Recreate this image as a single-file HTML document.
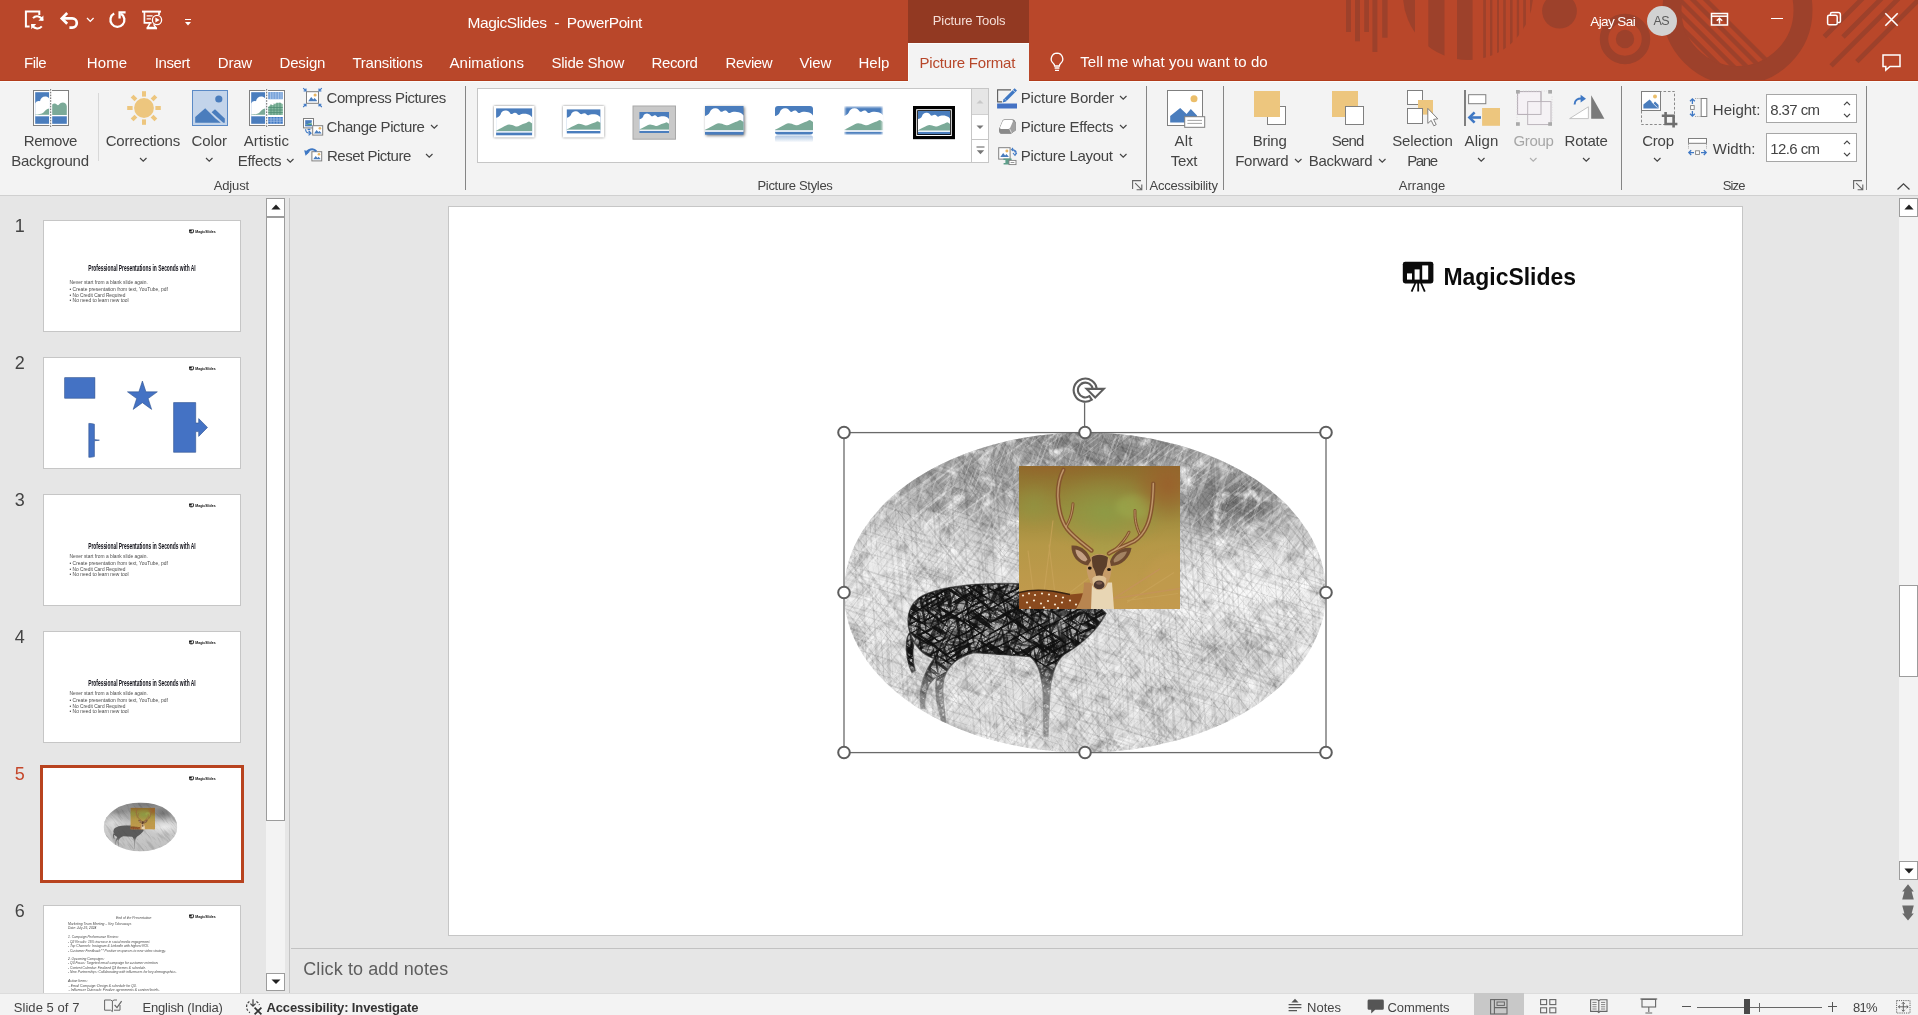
<!DOCTYPE html>
<html lang="en"><head><meta charset="utf-8"><title>MagicSlides - PowerPoint</title>
<style>
html,body{margin:0;padding:0;}
body{width:1918px;height:1015px;overflow:hidden;background:#E6E6E6;font-family:"Liberation Sans",sans-serif;position:relative;}
.t{position:absolute;white-space:pre;line-height:1;margin:0;padding:0;}
.r{position:absolute;box-sizing:border-box;display:block;}
svg{overflow:visible}
</style></head><body><div id="app" style="position:absolute;left:0;top:0;width:1918px;height:1015px;will-change:transform;">
<!-- part_header -->
<div class="r" style="left:0px;top:0px;width:1918px;height:81px;background:#B9472A;"></div>
<svg class="r" style="left:0px;top:0px;overflow:hidden;" width="1918" height="81" viewBox="0 0 1918 81"><rect x="1346" y="0" width="5" height="32" fill="#9D412B"/><rect x="1355" y="0" width="5" height="41.3" fill="#9D412B"/><rect x="1364.2" y="0" width="4.8" height="32" fill="#9D412B"/><rect x="1372.4" y="0" width="5" height="52" fill="#9D412B"/><rect x="1382.2" y="0" width="5.4" height="37.7" fill="#9D412B"/><clipPath id="hd"><circle cx="1468" cy="-5" r="65"/></clipPath><g clip-path="url(#hd)"><rect x="1403" y="0" width="12" height="70" fill="#9D412B"/><rect x="1428.3" y="0" width="16.2" height="70" fill="#9D412B"/><rect x="1457" y="0" width="15.6" height="70" fill="#9D412B"/><rect x="1483.2" y="0" width="2.7" height="70" fill="#9D412B"/><rect x="1490" y="0" width="2.4" height="70" fill="#9D412B"/><rect x="1497" y="0" width="2" height="70" fill="#9D412B"/><rect x="1503.2" y="0" width="2.6" height="70" fill="#9D412B"/><rect x="1510" y="0" width="2.6" height="70" fill="#9D412B"/><rect x="1516.8" y="0" width="2.3" height="70" fill="#9D412B"/><rect x="1523.2" y="0" width="2.7" height="70" fill="#9D412B"/><rect x="1530" y="0" width="3" height="70" fill="#9D412B"/></g><circle cx="1559.5" cy="11.1" r="17.4" fill="#9D412B"/><circle cx="1625" cy="39" r="21" fill="none" stroke="#9D412B" stroke-width="8.5"/><circle cx="1625" cy="39" r="9.2" fill="#9D412B"/><circle cx="1737.5" cy="10" r="65.5" fill="none" stroke="#9D412B" stroke-width="19"/><clipPath id="br"><circle cx="1737.5" cy="10" r="57"/></clipPath><g clip-path="url(#br)"><path d="M1621 -20 L1741 100" stroke="#9D412B" stroke-width="4.4" fill="none"/><path d="M1634 -20 L1754 100" stroke="#9D412B" stroke-width="4.4" fill="none"/><path d="M1647 -20 L1767 100" stroke="#9D412B" stroke-width="4.4" fill="none"/><path d="M1660 -20 L1780 100" stroke="#9D412B" stroke-width="4.4" fill="none"/><path d="M1673 -20 L1793 100" stroke="#9D412B" stroke-width="4.4" fill="none"/><path d="M1686 -20 L1806 100" stroke="#9D412B" stroke-width="4.4" fill="none"/></g><path d="M1824.3 36.7 L1881 -20" stroke="#9D412B" stroke-width="4.8" fill="none"/><path d="M1843 37 L1900 -20" stroke="#9D412B" stroke-width="4.8" fill="none"/><path d="M1831.1 65.9 L1917 -20" stroke="#9D412B" stroke-width="4.8" fill="none"/><path d="M1856.8 61.6 L1938.4 -20" stroke="#9D412B" stroke-width="4.8" fill="none"/></svg>
<div class="r" style="left:0px;top:80px;width:1918px;height:1px;background:#B23C1B;"></div>
<div class="r" style="left:908px;top:0px;width:121px;height:43px;background:#923922;"></div>
<div class="r" style="left:908px;top:43px;width:121px;height:38px;background:#F3F3F3;"></div>
<div class="r" style="left:908px;top:43px;width:121px;height:1px;background:#FAFCFC;"></div>
<div class="r" style="left:908px;top:43px;width:1px;height:38px;background:#FAFCFC;"></div>
<div class="t" style="left:932.80px;top:14.00px;font-size:13px;color:#F4DDD6;letter-spacing:-0.114px;">Picture Tools</div>
<div class="t" style="left:467.50px;top:14.88px;font-size:15.5px;color:#fff;letter-spacing:-0.412px;">MagicSlides  -  PowerPoint</div>
<div class="t" style="left:24.00px;top:55.30px;font-size:15px;color:#fff;letter-spacing:-0.493px;">File</div>
<div class="t" style="left:86.80px;top:55.30px;font-size:15px;color:#fff;letter-spacing:0.097px;">Home</div>
<div class="t" style="left:154.80px;top:55.30px;font-size:15px;color:#fff;letter-spacing:-0.419px;">Insert</div>
<div class="t" style="left:217.80px;top:55.30px;font-size:15px;color:#fff;letter-spacing:-0.201px;">Draw</div>
<div class="t" style="left:279.50px;top:55.30px;font-size:15px;color:#fff;letter-spacing:-0.157px;">Design</div>
<div class="t" style="left:352.50px;top:55.30px;font-size:15px;color:#fff;letter-spacing:-0.255px;">Transitions</div>
<div class="t" style="left:449.50px;top:55.30px;font-size:15px;color:#fff;letter-spacing:0.030px;">Animations</div>
<div class="t" style="left:551.50px;top:55.30px;font-size:15px;color:#fff;letter-spacing:-0.255px;">Slide Show</div>
<div class="t" style="left:651.50px;top:55.30px;font-size:15px;color:#fff;letter-spacing:-0.393px;">Record</div>
<div class="t" style="left:725.50px;top:55.30px;font-size:15px;color:#fff;letter-spacing:-0.414px;">Review</div>
<div class="t" style="left:799.50px;top:55.30px;font-size:15px;color:#fff;letter-spacing:-0.136px;">View</div>
<div class="t" style="left:858.50px;top:55.30px;font-size:15px;color:#fff;letter-spacing:0.037px;">Help</div>
<div class="t" style="left:919.50px;top:55.30px;font-size:15px;color:#B7472A;letter-spacing:-0.190px;">Picture Format</div>
<div class="t" style="left:1080.20px;top:54.30px;font-size:15px;color:#fff;letter-spacing:0.093px;">Tell me what you want to do</div>
<svg class="r" style="left:1048px;top:51px;" width="18" height="22" viewBox="0 0 18 22"><path d="M9 2.2a5.8 5.8 0 0 0-3.6 10.3c.8.7 1.2 1.5 1.2 2.5h4.8c0-1 .4-1.8 1.2-2.5A5.8 5.8 0 0 0 9 2.2z" fill="none" stroke="#fff" stroke-width="1.3"/><path d="M6.6 17h4.8M7 19.3h4" stroke="#fff" stroke-width="1.3"/></svg>
<div class="t" style="left:1590.20px;top:14.57px;font-size:13.5px;color:#fff;letter-spacing:-0.566px;">Ajay Sai</div>
<div class="r" style="left:1646.5px;top:6px;width:30px;height:30px;border-radius:50%;background:#D2D2D2"></div>
<div class="t" style="left:1653.50px;top:14.92px;font-size:12.5px;color:#5a5a5a;letter-spacing:-0.588px;">AS</div>
<svg class="r" style="left:1710px;top:12px;" width="19" height="15" viewBox="0 0 19 15"><rect x="1.5" y="1.5" width="16" height="11.5" fill="none" stroke="#fff" stroke-width="1.5"/><path d="M1.5 4.2h16" stroke="#fff" stroke-width="1.5"/><path d="M9.5 11.8V6.4M6.8 8.8l2.7-2.6L12.2 8.8" fill="none" stroke="#fff" stroke-width="1.5"/></svg>
<div class="r" style="left:1771px;top:17.7px;width:12px;height:1.6px;background:#fff;"></div>
<svg class="r" style="left:1826px;top:11px;" width="16" height="16" viewBox="0 0 16 16"><rect x="1.6" y="4.2" width="9.6" height="9.6" rx="1.6" fill="none" stroke="#fff" stroke-width="1.5"/><path d="M4.4 4V3.2a1.6 1.6 0 0 1 1.6-1.6h6.2a2.2 2.2 0 0 1 2.2 2.2V10a1.6 1.6 0 0 1-1.6 1.6h-1" fill="none" stroke="#fff" stroke-width="1.5"/></svg>
<svg class="r" style="left:1884px;top:12px;" width="15" height="15" viewBox="0 0 15 15"><path d="M1.3 1.3L13.7 13.7M13.7 1.3L1.3 13.7" stroke="#fff" stroke-width="1.6"/></svg>
<svg class="r" style="left:1881px;top:53px;" width="21" height="19" viewBox="0 0 21 19"><path d="M2 2h17v11.5h-10l-4.2 3.6v-3.6H2z" fill="none" stroke="#fff" stroke-width="1.5" stroke-linejoin="miter"/></svg>
<svg class="r" style="left:24px;top:10px;" width="22" height="21" viewBox="0 0 22 21"><path d="M5.6 16.4H1.9V1.4h13.4v3.6" fill="none" stroke="#fff" stroke-width="2"/><path d="M18.6 10.6a5.6 5.6 0 0 0-9.6-2.4M8 14.2a5.6 5.6 0 0 0 9.8 2.2" fill="none" stroke="#fff" stroke-width="2"/><path d="M19.4 5.6v5.2h-5zM7.2 19.2v-5.2h5z" fill="#fff"/></svg>
<svg class="r" style="left:59px;top:11px;" width="22" height="19" viewBox="0 0 22 19"><path d="M4 7.4h9.2a4.6 4.6 0 0 1 0 9.2H10.4" fill="none" stroke="#fff" stroke-width="2.7"/><path d="M8.2 2L2.8 7.4l5.4 5.4" fill="none" stroke="#fff" stroke-width="2.7"/></svg>
<svg class="r" style="left:86.1px;top:17px;" width="8.6" height="5.4" viewBox="0 0 8.6 5.4"><path d="M1 1 L4.3 4.4 L7.6 1" fill="none" stroke="#fff" stroke-width="1.3"/></svg>
<svg class="r" style="left:107px;top:10px;" width="21" height="20" viewBox="0 0 21 20"><path d="M7.2 3.6A7 7 0 1 0 14 3.8" fill="none" stroke="#fff" stroke-width="2.3"/><path d="M12.6 8.4V2.4H18.6" fill="none" stroke="#fff" stroke-width="2.3"/></svg>
<svg class="r" style="left:141px;top:10px;" width="23" height="20" viewBox="0 0 23 20"><path d="M1 1.6h19" stroke="#fff" stroke-width="2"/><path d="M3.4 2v10.8h7.2M18 2v3" fill="none" stroke="#fff" stroke-width="1.7"/><path d="M5.6 5.8h6M5.6 8.8h4.4" stroke="#fff" stroke-width="1.2"/><circle cx="16" cy="10" r="4.6" fill="none" stroke="#fff" stroke-width="1.3"/><path d="M14.4 7.4v5.2l4.2-2.6z" fill="#fff"/><path d="M9 13.4l-2.4 4h8.2l-2.2-3" fill="none" stroke="#fff" stroke-width="1.5"/><path d="M5.6 18.4h10.4" stroke="#fff" stroke-width="1.8"/></svg>
<div class="r" style="left:184.5px;top:19px;width:6px;height:1.2px;background:#fff;"></div>
<svg class="r" style="left:183.5px;top:21.5px;" width="8" height="4" viewBox="0 0 8 4"><path d="M1 0h6L4 3.4z" fill="#fff"/></svg>
<!-- part_ribbon -->
<div class="r" style="left:0px;top:81px;width:1918px;height:114px;background:#F3F3F3;"></div>
<div class="r" style="left:0px;top:81px;width:908px;height:1px;background:#FAFCFC;"></div>
<div class="r" style="left:1029px;top:81px;width:889px;height:1px;background:#FAFCFC;"></div>
<div class="r" style="left:0px;top:195px;width:1918px;height:1px;background:#D0D0D0;"></div>
<div class="r" style="left:465px;top:86px;width:1px;height:104px;background:#858585;"></div>
<div class="r" style="left:1146px;top:86px;width:1px;height:104px;background:#858585;"></div>
<div class="r" style="left:1223px;top:86px;width:1px;height:104px;background:#858585;"></div>
<div class="r" style="left:1621px;top:86px;width:1px;height:104px;background:#858585;"></div>
<div class="r" style="left:1866px;top:86px;width:1px;height:104px;background:#858585;"></div>
<div class="r" style="left:98px;top:93px;width:1px;height:68px;background:#D8D8D8;"></div>
<div class="t" style="left:213.75px;top:178.50px;font-size:13px;color:#444444;letter-spacing:-0.147px;">Adjust</div>
<div class="t" style="left:757.50px;top:178.50px;font-size:13px;color:#444444;letter-spacing:-0.320px;">Picture Styles</div>
<div class="t" style="left:1149.50px;top:178.50px;font-size:13px;color:#444444;letter-spacing:-0.196px;">Accessibility</div>
<div class="t" style="left:1398.80px;top:178.50px;font-size:13px;color:#444444;letter-spacing:0.021px;">Arrange</div>
<div class="t" style="left:1722.80px;top:178.50px;font-size:13px;color:#444444;letter-spacing:-0.898px;">Size</div>
<div class="t" style="left:23.75px;top:132.90px;font-size:15px;color:#444444;letter-spacing:-0.434px;">Remove</div>
<div class="t" style="left:11.25px;top:152.65px;font-size:15px;color:#444444;letter-spacing:-0.256px;">Background</div>
<div class="t" style="left:105.75px;top:132.90px;font-size:15px;color:#444444;letter-spacing:-0.222px;">Corrections</div>
<div class="t" style="left:191.50px;top:132.90px;font-size:15px;color:#444444;letter-spacing:-0.069px;">Color</div>
<div class="t" style="left:243.75px;top:132.90px;font-size:15px;color:#444444;letter-spacing:0.031px;">Artistic</div>
<div class="t" style="left:237.75px;top:152.65px;font-size:15px;color:#444444;letter-spacing:-0.297px;">Effects</div>
<div class="t" style="left:1174.50px;top:132.90px;font-size:15px;color:#444444;letter-spacing:0.248px;">Alt</div>
<div class="t" style="left:1170.75px;top:152.65px;font-size:15px;color:#444444;letter-spacing:-0.315px;">Text</div>
<div class="t" style="left:1252.75px;top:132.90px;font-size:15px;color:#444444;letter-spacing:-0.254px;">Bring</div>
<div class="t" style="left:1235.25px;top:152.65px;font-size:15px;color:#444444;letter-spacing:-0.288px;">Forward</div>
<div class="t" style="left:1331.80px;top:132.90px;font-size:15px;color:#444444;letter-spacing:-0.833px;">Send</div>
<div class="t" style="left:1308.80px;top:152.65px;font-size:15px;color:#444444;letter-spacing:-0.308px;">Backward</div>
<div class="t" style="left:1392.20px;top:132.90px;font-size:15px;color:#444444;letter-spacing:-0.123px;">Selection</div>
<div class="t" style="left:1407.20px;top:152.65px;font-size:15px;color:#444444;letter-spacing:-1.358px;">Pane</div>
<div class="t" style="left:1464.50px;top:132.90px;font-size:15px;color:#444444;letter-spacing:0.129px;">Align</div>
<div class="t" style="left:1564.50px;top:132.90px;font-size:15px;color:#444444;letter-spacing:-0.149px;">Rotate</div>
<div class="t" style="left:1642.20px;top:132.90px;font-size:15px;color:#444444;letter-spacing:-0.228px;">Crop</div>
<div class="t" style="left:1513.50px;top:132.90px;font-size:15px;color:#A6A6A6;letter-spacing:-0.338px;">Group</div>
<svg class="r" style="left:139.15px;top:157.4px;" width="8.5" height="5.2" viewBox="0 0 8.5 5.2"><path d="M1 1 L4.25 4.2 L7.5 1" fill="none" stroke="#444444" stroke-width="1.2"/></svg>
<svg class="r" style="left:204.95px;top:157.4px;" width="8.5" height="5.2" viewBox="0 0 8.5 5.2"><path d="M1 1 L4.25 4.2 L7.5 1" fill="none" stroke="#444444" stroke-width="1.2"/></svg>
<svg class="r" style="left:286.15px;top:158.4px;" width="8.5" height="5.2" viewBox="0 0 8.5 5.2"><path d="M1 1 L4.25 4.2 L7.5 1" fill="none" stroke="#444444" stroke-width="1.2"/></svg>
<svg class="r" style="left:1293.65px;top:158.4px;" width="8.5" height="5.2" viewBox="0 0 8.5 5.2"><path d="M1 1 L4.25 4.2 L7.5 1" fill="none" stroke="#444444" stroke-width="1.2"/></svg>
<svg class="r" style="left:1377.95px;top:158.4px;" width="8.5" height="5.2" viewBox="0 0 8.5 5.2"><path d="M1 1 L4.25 4.2 L7.5 1" fill="none" stroke="#444444" stroke-width="1.2"/></svg>
<svg class="r" style="left:1477.45px;top:157.4px;" width="8.5" height="5.2" viewBox="0 0 8.5 5.2"><path d="M1 1 L4.25 4.2 L7.5 1" fill="none" stroke="#444444" stroke-width="1.2"/></svg>
<svg class="r" style="left:1529.25px;top:157.4px;" width="8.5" height="5.2" viewBox="0 0 8.5 5.2"><path d="M1 1 L4.25 4.2 L7.5 1" fill="none" stroke="#B0B0B0" stroke-width="1.2"/></svg>
<svg class="r" style="left:1581.75px;top:157.4px;" width="8.5" height="5.2" viewBox="0 0 8.5 5.2"><path d="M1 1 L4.25 4.2 L7.5 1" fill="none" stroke="#444444" stroke-width="1.2"/></svg>
<svg class="r" style="left:1653.25px;top:157.4px;" width="8.5" height="5.2" viewBox="0 0 8.5 5.2"><path d="M1 1 L4.25 4.2 L7.5 1" fill="none" stroke="#444444" stroke-width="1.2"/></svg>
<div class="t" style="left:326.50px;top:90.40px;font-size:15px;color:#444444;letter-spacing:-0.439px;">Compress Pictures</div>
<div class="t" style="left:326.50px;top:119.20px;font-size:15px;color:#444444;letter-spacing:-0.386px;">Change Picture</div>
<div class="t" style="left:327.00px;top:148.20px;font-size:15px;color:#444444;letter-spacing:-0.484px;">Reset Picture</div>
<div class="t" style="left:1020.75px;top:90.40px;font-size:15px;color:#444444;letter-spacing:-0.188px;">Picture Border</div>
<div class="t" style="left:1020.75px;top:119.20px;font-size:15px;color:#444444;letter-spacing:-0.262px;">Picture Effects</div>
<div class="t" style="left:1020.75px;top:148.20px;font-size:15px;color:#444444;letter-spacing:-0.278px;">Picture Layout</div>
<svg class="r" style="left:429.75px;top:124.4px;" width="8.5" height="5.2" viewBox="0 0 8.5 5.2"><path d="M1 1 L4.25 4.2 L7.5 1" fill="none" stroke="#444444" stroke-width="1.2"/></svg>
<svg class="r" style="left:424.75px;top:153.4px;" width="8.5" height="5.2" viewBox="0 0 8.5 5.2"><path d="M1 1 L4.25 4.2 L7.5 1" fill="none" stroke="#444444" stroke-width="1.2"/></svg>
<svg class="r" style="left:1119.25px;top:95.4px;" width="8.5" height="5.2" viewBox="0 0 8.5 5.2"><path d="M1 1 L4.25 4.2 L7.5 1" fill="none" stroke="#444444" stroke-width="1.2"/></svg>
<svg class="r" style="left:1119.25px;top:124.4px;" width="8.5" height="5.2" viewBox="0 0 8.5 5.2"><path d="M1 1 L4.25 4.2 L7.5 1" fill="none" stroke="#444444" stroke-width="1.2"/></svg>
<svg class="r" style="left:1119.25px;top:152.9px;" width="8.5" height="5.2" viewBox="0 0 8.5 5.2"><path d="M1 1 L4.25 4.2 L7.5 1" fill="none" stroke="#444444" stroke-width="1.2"/></svg>
<div class="t" style="left:1712.80px;top:102.30px;font-size:15px;color:#444444;letter-spacing:0.025px;">Height:</div>
<div class="t" style="left:1712.80px;top:141.30px;font-size:15px;color:#444444;letter-spacing:0.032px;">Width:</div>
<div class="r" style="left:1766.3px;top:94.3px;width:91px;height:28.8px;background:#fff;border:1px solid #A6A6A6;"></div>
<div class="r" style="left:1766.3px;top:133.3px;width:91px;height:28.8px;background:#fff;border:1px solid #A6A6A6;"></div>
<div class="t" style="left:1770.20px;top:101.80px;font-size:15px;color:#444444;letter-spacing:-0.580px;">8.37 cm</div>
<div class="t" style="left:1770.20px;top:140.80px;font-size:15px;color:#444444;letter-spacing:-0.580px;">12.6 cm</div>
<svg class="r" style="left:1842px;top:98.5px;" width="10" height="21" viewBox="0 0 10 21"><path d="M2 6.2L5 3.2L8 6.2M2 14.8L5 17.8L8 14.8" fill="none" stroke="#444" stroke-width="1.2"/></svg>
<svg class="r" style="left:1842px;top:137.5px;" width="10" height="21" viewBox="0 0 10 21"><path d="M2 6.2L5 3.2L8 6.2M2 14.8L5 17.8L8 14.8" fill="none" stroke="#444" stroke-width="1.2"/></svg>
<svg class="r" style="left:1131.5px;top:180px;" width="11" height="11" viewBox="0 0 11 11"><path d="M0.6 9V0.6H9" fill="none" stroke="#666" stroke-width="1.1"/><path d="M3.2 3.2L9.6 9.6M9.8 4.6V9.8H4.6" fill="none" stroke="#666" stroke-width="1.1"/></svg>
<svg class="r" style="left:1852.5px;top:180px;" width="11" height="11" viewBox="0 0 11 11"><path d="M0.6 9V0.6H9" fill="none" stroke="#666" stroke-width="1.1"/><path d="M3.2 3.2L9.6 9.6M9.8 4.6V9.8H4.6" fill="none" stroke="#666" stroke-width="1.1"/></svg>
<svg class="r" style="left:1896px;top:182px;" width="15" height="9" viewBox="0 0 15 9"><path d="M1.5 7.5L7.5 1.8L13.5 7.5" fill="none" stroke="#444" stroke-width="1.3"/></svg>
<div class="r" style="left:477px;top:88px;width:512px;height:74.5px;background:#fff;border:1px solid #C6C6C6;"></div>
<div class="r" style="left:970.5px;top:88px;width:18.5px;height:74.5px;background:#fff;border:1px solid #C6C6C6;"></div>
<div class="r" style="left:971.5px;top:89px;width:16.5px;height:25px;background:#E6E6E6;"></div>
<div class="r" style="left:971.5px;top:114px;width:16.5px;height:1px;background:#D0D0D0;"></div>
<div class="r" style="left:971.5px;top:138.5px;width:16.5px;height:1px;background:#C6C6C6;"></div>
<svg class="r" style="left:976px;top:99px;" width="8" height="5" viewBox="0 0 8 5"><path d="M0.5 4.5L4 1L7.5 4.5z" fill="#C8C8C8"/></svg>
<svg class="r" style="left:976px;top:125px;" width="8" height="5" viewBox="0 0 8 5"><path d="M0.5 0.5L4 4L7.5 0.5z" fill="#777"/></svg>
<svg class="r" style="left:975.5px;top:146px;" width="9" height="10" viewBox="0 0 9 10"><path d="M0.5 1h8" stroke="#777" stroke-width="1.2"/><path d="M0.8 4.2L4.5 8.2L8.2 4.2z" fill="#777"/></svg>
<svg class="r" style="left:493.8px;top:105.5px;" width="40.5" height="31.5" viewBox="0 0 40.5 31.5"><rect x="0" y="0" width="40.5" height="31.5" fill="#fff" style="filter:drop-shadow(0 0.5px 1.2px rgba(0,0,0,.55))"/><g transform="translate(2.1 2.4)"><rect x="0" y="0" width="36" height="26.9" fill="#4A7DBD"/><g transform="scale(1 0.996296)"><path d="M0 9.4 C1.5 9 3.6 8 4.5 6 C5 3.4 7.5 1.8 10 2.1 C12 2.3 13.4 3.6 14.2 5 C15 5.8 16 5.6 16.8 5 C18 4 20 4 21 5.4 C21.6 6.4 22.6 6.9 23.4 6.5 C25 5.2 29 5 31.5 5.8 C33.6 6.4 35.2 7.6 36 8.9 V23 H0z" fill="#fff"/><path d="M0 22.4 C2 21.6 4 20.2 6.5 19 C9 17.8 11 16.3 13 16.2 C15 16.2 17 17.2 19 17.8 C20.6 18.4 22 18.2 23.6 17.2 C25.6 16 28 15.2 30 14.6 C31.4 14.2 32 13.2 32.9 13.2 C33.8 13.3 34.6 14.2 36 15.1 V22.9 H0z" fill="#7BAA98"/><rect x="0" y="22.9" width="36" height="1.4" fill="#fff"/></g></g></svg>
<svg class="r" style="left:563.3px;top:105.5px;" width="41.2" height="31.5" viewBox="0 0 41.2 31.5"><rect x="0" y="0" width="41.2" height="31.5" fill="#fff" style="filter:drop-shadow(0 0.5px 1.2px rgba(0,0,0,.5))"/><g transform="translate(3.8 3.4)"><rect x="0" y="0" width="33.6" height="24" fill="#4A7DBD"/><g transform="scale(0.933333 0.888889)"><path d="M0 9.4 C1.5 9 3.6 8 4.5 6 C5 3.4 7.5 1.8 10 2.1 C12 2.3 13.4 3.6 14.2 5 C15 5.8 16 5.6 16.8 5 C18 4 20 4 21 5.4 C21.6 6.4 22.6 6.9 23.4 6.5 C25 5.2 29 5 31.5 5.8 C33.6 6.4 35.2 7.6 36 8.9 V23 H0z" fill="#fff"/><path d="M0 22.4 C2 21.6 4 20.2 6.5 19 C9 17.8 11 16.3 13 16.2 C15 16.2 17 17.2 19 17.8 C20.6 18.4 22 18.2 23.6 17.2 C25.6 16 28 15.2 30 14.6 C31.4 14.2 32 13.2 32.9 13.2 C33.8 13.3 34.6 14.2 36 15.1 V22.9 H0z" fill="#7BAA98"/><rect x="0" y="22.9" width="36" height="1.4" fill="#fff"/></g></g></svg>
<svg class="r" style="left:632.5px;top:105.5px;" width="42.5" height="33.2" viewBox="0 0 42.5 33.2"><rect x="0" y="0" width="42.5" height="33.2" fill="#C9C9C9" stroke="#A8A8A8" stroke-width="1"/><g transform="translate(6.4 6)"><rect x="0" y="0" width="29.6" height="21" fill="#4A7DBD"/><g transform="scale(0.822222 0.777778)"><path d="M0 9.4 C1.5 9 3.6 8 4.5 6 C5 3.4 7.5 1.8 10 2.1 C12 2.3 13.4 3.6 14.2 5 C15 5.8 16 5.6 16.8 5 C18 4 20 4 21 5.4 C21.6 6.4 22.6 6.9 23.4 6.5 C25 5.2 29 5 31.5 5.8 C33.6 6.4 35.2 7.6 36 8.9 V23 H0z" fill="#fff"/><path d="M0 22.4 C2 21.6 4 20.2 6.5 19 C9 17.8 11 16.3 13 16.2 C15 16.2 17 17.2 19 17.8 C20.6 18.4 22 18.2 23.6 17.2 C25.6 16 28 15.2 30 14.6 C31.4 14.2 32 13.2 32.9 13.2 C33.8 13.3 34.6 14.2 36 15.1 V22.9 H0z" fill="#7BAA98"/><rect x="0" y="22.9" width="36" height="1.4" fill="#fff"/></g></g></svg>
<svg class="r" style="left:704.5px;top:105.8px;" width="38.5" height="28.7" viewBox="0 0 38.5 28.7"><g style="filter:drop-shadow(1px 1.5px 1.5px rgba(0,0,0,.55))"><rect x="0" y="0" width="38.5" height="28.7" fill="#4A7DBD"/><g transform="scale(1.06944 1.06296)"><path d="M0 9.4 C1.5 9 3.6 8 4.5 6 C5 3.4 7.5 1.8 10 2.1 C12 2.3 13.4 3.6 14.2 5 C15 5.8 16 5.6 16.8 5 C18 4 20 4 21 5.4 C21.6 6.4 22.6 6.9 23.4 6.5 C25 5.2 29 5 31.5 5.8 C33.6 6.4 35.2 7.6 36 8.9 V23 H0z" fill="#fff"/><path d="M0 22.4 C2 21.6 4 20.2 6.5 19 C9 17.8 11 16.3 13 16.2 C15 16.2 17 17.2 19 17.8 C20.6 18.4 22 18.2 23.6 17.2 C25.6 16 28 15.2 30 14.6 C31.4 14.2 32 13.2 32.9 13.2 C33.8 13.3 34.6 14.2 36 15.1 V22.9 H0z" fill="#7BAA98"/><rect x="0" y="22.9" width="36" height="1.4" fill="#fff"/></g></g></svg>
<svg class="r" style="left:774.5px;top:105.8px;" width="38" height="37" viewBox="0 0 38 37"><defs><clipPath id="rr5"><rect x="0" y="0" width="38" height="28.7" rx="3"/></clipPath><linearGradient id="rf5" x1="0" y1="0" x2="0" y2="1"><stop offset="0" stop-color="#4A7DBD" stop-opacity=".45"/><stop offset="1" stop-color="#4A7DBD" stop-opacity="0"/></linearGradient></defs><g clip-path="url(#rr5)"><rect x="0" y="0" width="38" height="28.7" fill="#4A7DBD"/><g transform="scale(1.05556 1.06296)"><path d="M0 9.4 C1.5 9 3.6 8 4.5 6 C5 3.4 7.5 1.8 10 2.1 C12 2.3 13.4 3.6 14.2 5 C15 5.8 16 5.6 16.8 5 C18 4 20 4 21 5.4 C21.6 6.4 22.6 6.9 23.4 6.5 C25 5.2 29 5 31.5 5.8 C33.6 6.4 35.2 7.6 36 8.9 V23 H0z" fill="#fff"/><path d="M0 22.4 C2 21.6 4 20.2 6.5 19 C9 17.8 11 16.3 13 16.2 C15 16.2 17 17.2 19 17.8 C20.6 18.4 22 18.2 23.6 17.2 C25.6 16 28 15.2 30 14.6 C31.4 14.2 32 13.2 32.9 13.2 C33.8 13.3 34.6 14.2 36 15.1 V22.9 H0z" fill="#7BAA98"/><rect x="0" y="22.9" width="36" height="1.4" fill="#fff"/></g></g><rect x="0" y="29.5" width="38" height="7" rx="2" fill="url(#rf5)"/></svg>
<svg class="r" style="left:843.8px;top:105.8px;" width="39.2" height="28.7" viewBox="0 0 39.2 28.7"><defs><filter id="sef" x="-20%" y="-20%" width="140%" height="140%"><feGaussianBlur stdDeviation="0.9"/></filter><mask id="sem" maskUnits="userSpaceOnUse" x="-3" y="-3" width="46" height="36"><rect x="1" y="1" width="37.2" height="27.6" fill="#fff" filter="url(#sef)"/></mask></defs><g mask="url(#sem)"><rect x="0" y="0" width="39.2" height="28.7" fill="#4A7DBD"/><g transform="scale(1.08889 1.06296)"><path d="M0 9.4 C1.5 9 3.6 8 4.5 6 C5 3.4 7.5 1.8 10 2.1 C12 2.3 13.4 3.6 14.2 5 C15 5.8 16 5.6 16.8 5 C18 4 20 4 21 5.4 C21.6 6.4 22.6 6.9 23.4 6.5 C25 5.2 29 5 31.5 5.8 C33.6 6.4 35.2 7.6 36 8.9 V23 H0z" fill="#fff"/><path d="M0 22.4 C2 21.6 4 20.2 6.5 19 C9 17.8 11 16.3 13 16.2 C15 16.2 17 17.2 19 17.8 C20.6 18.4 22 18.2 23.6 17.2 C25.6 16 28 15.2 30 14.6 C31.4 14.2 32 13.2 32.9 13.2 C33.8 13.3 34.6 14.2 36 15.1 V22.9 H0z" fill="#7BAA98"/><rect x="0" y="22.9" width="36" height="1.4" fill="#fff"/></g></g></svg>
<svg class="r" style="left:913px;top:105.8px;" width="42" height="33.2" viewBox="0 0 42 33.2"><rect x="0" y="0" width="42" height="33.2" fill="#000"/><rect x="3.2" y="3.2" width="35.6" height="26.8" fill="#fff"/><rect x="4.2" y="4.2" width="33.6" height="24.8" fill="#000"/><g transform="translate(5 5)"><rect x="0" y="0" width="32" height="23.2" fill="#4A7DBD"/><g transform="scale(0.888889 0.859259)"><path d="M0 9.4 C1.5 9 3.6 8 4.5 6 C5 3.4 7.5 1.8 10 2.1 C12 2.3 13.4 3.6 14.2 5 C15 5.8 16 5.6 16.8 5 C18 4 20 4 21 5.4 C21.6 6.4 22.6 6.9 23.4 6.5 C25 5.2 29 5 31.5 5.8 C33.6 6.4 35.2 7.6 36 8.9 V23 H0z" fill="#fff"/><path d="M0 22.4 C2 21.6 4 20.2 6.5 19 C9 17.8 11 16.3 13 16.2 C15 16.2 17 17.2 19 17.8 C20.6 18.4 22 18.2 23.6 17.2 C25.6 16 28 15.2 30 14.6 C31.4 14.2 32 13.2 32.9 13.2 C33.8 13.3 34.6 14.2 36 15.1 V22.9 H0z" fill="#7BAA98"/><rect x="0" y="22.9" width="36" height="1.4" fill="#fff"/></g></g></svg>
<svg class="r" style="left:33px;top:90px;" width="36" height="36" viewBox="0 0 36 36"><rect x="0.5" y="0.5" width="35" height="35" fill="#fff" stroke="#7F7F7F" stroke-width="1"/><rect x="2.2" y="2.2" width="14" height="31.6" fill="#4A7DBD"/><path d="M2.2 13.5 C3 11 5.5 10.5 7 11.2 C7.5 7.5 11 5.6 14 6.8 C15 7.2 15.8 7.8 16.2 8.6 V25 H2.2z" fill="#fff"/><path d="M2.2 24.6 C5 24.4 9 24.2 10.5 22.5 C12 20.8 13.5 18.6 16.2 18.4 V25 H2.2z" fill="#7BAA98"/><rect x="2.2" y="24.8" width="14" height="1.5" fill="#fff"/><path d="M19.2 25 V14.5 C20.5 13.2 22.5 13 23.8 14.6 C24.6 15.4 25.2 15.6 26 14.6 C27.5 12.4 30.5 11.6 32.5 13.6 C33.3 14.4 33.7 15.4 33.8 16.5 V25z" fill="#7BAA98"/><rect x="19.2" y="26.3" width="14.6" height="7.5" fill="#4A7DBD"/><rect x="16.4" y="-1" width="2.6" height="38" fill="#fff"/><path d="M17.7 -1 V37" stroke="#555" stroke-width="0.9" stroke-dasharray="1.6 1.2"/></svg>
<svg class="r" style="left:125.8px;top:89.8px;" width="36" height="36" viewBox="0 0 36 36"><circle cx="18" cy="18" r="9.9" fill="#EDC67E"/><rect x="16" y="1.2" width="4" height="5.4" fill="#EDC67E" transform="rotate(0 18 18)"/><rect x="16" y="1.2" width="4" height="5.4" fill="#EDC67E" transform="rotate(45 18 18)"/><rect x="16" y="1.2" width="4" height="5.4" fill="#EDC67E" transform="rotate(90 18 18)"/><rect x="16" y="1.2" width="4" height="5.4" fill="#EDC67E" transform="rotate(135 18 18)"/><rect x="16" y="1.2" width="4" height="5.4" fill="#EDC67E" transform="rotate(180 18 18)"/><rect x="16" y="1.2" width="4" height="5.4" fill="#EDC67E" transform="rotate(225 18 18)"/><rect x="16" y="1.2" width="4" height="5.4" fill="#EDC67E" transform="rotate(270 18 18)"/><rect x="16" y="1.2" width="4" height="5.4" fill="#EDC67E" transform="rotate(315 18 18)"/></svg>
<svg class="r" style="left:192px;top:90px;" width="36" height="36" viewBox="0 0 36 36"><rect x="0.5" y="0.5" width="35" height="35" fill="#C3D4EA" stroke="#5B8AC6" stroke-width="1"/><circle cx="26.8" cy="9" r="3.6" fill="#4A7DBD"/><path d="M3.2 27 L13.2 18.2 L23.5 28.5 L28.8 32.8 H3.2z" fill="#4A7DBD"/><path d="M19.6 22.2 L23 19.2 L32.8 28.6 V32.8 H31.2z" fill="#4A7DBD"/></svg>
<svg class="r" style="left:249px;top:90px;" width="36" height="36" viewBox="0 0 36 36"><rect x="0.5" y="0.5" width="35" height="35" fill="#fff" stroke="#7F7F7F" stroke-width="1"/><rect x="2.2" y="2.2" width="14" height="31.6" fill="#4A7DBD"/><path d="M2.2 13.5 C3 11 5.5 10.5 7 11.2 C7.5 7.5 11 5.6 14 6.8 C15 7.2 15.8 7.8 16.2 8.6 V25 H2.2z" fill="#fff"/><path d="M2.2 24.6 C5 24.4 9 24.2 10.5 22.5 C12 20.8 13.5 18.6 16.2 18.4 V25 H2.2z" fill="#7BAA98"/><rect x="2.2" y="24.8" width="14" height="1.5" fill="#fff"/><rect x="19.2" y="2.2" width="14.6" height="7" fill="#5B8FD0"/><path d="M19.2 25 V17 C21 14.5 23 14.8 24.5 15.2 C26 13 30 11.5 33.8 14 V25z" fill="#86B9A0"/><rect x="19.2" y="27" width="14.6" height="6.8" fill="#3F78C4"/><path d="M19.2 4h14.6M19.2 6h14.6M19.2 8h14.6M19.2 29h14.6M19.2 31.2h14.6M21.5 2.2v7M24 2.2v7M26.8 2.2v7M29.5 2.2v7M32 2.2v7M22 27v6.8M25 27v6.8M28 27v6.8M31 27v6.8" stroke="#CFE0F5" stroke-width="0.7" opacity=".8"/><path d="M19.2 17.5h14.6M19.2 20h14.6M19.2 22.5h14.6M22 14v11M25 13.5v11.5M28 12.5v12.5M31 12.5v12.5" stroke="#3E7E66" stroke-width="0.8" opacity=".75"/><rect x="16.4" y="-1" width="2.6" height="38" fill="#fff"/><path d="M17.7 -1 V37" stroke="#555" stroke-width="0.9" stroke-dasharray="1.6 1.2"/></svg>
<svg class="r" style="left:303px;top:88px;" width="19" height="19.2" viewBox="0 0 19 19.2"><rect x="3.5" y="3.7" width="12" height="11.6" fill="#fff" stroke="#7F7F7F" stroke-width="1"/><circle cx="12.1" cy="6.98" r="1.56" fill="#E9B562"/><path d="M5.21 13.28 L8.2 9.122 L10.28 11.516 L11.58 10.13 L13.92 12.524 L13.92 13.28z" fill="#4A7DBD"/><path d="M0.2 0.2 L3 3 M0.6 3 H3 V0.6" fill="none" stroke="#3F78C4" stroke-width="1.1"/><path d="M18.8 0.2 L16 3 M18.4 3 H16 V0.6" fill="none" stroke="#3F78C4" stroke-width="1.1"/><path d="M0.2 19 L3 16.2 M0.6 16.2 H3 V18.6" fill="none" stroke="#3F78C4" stroke-width="1.1"/><path d="M18.8 19 L16 16.2 M18.4 16.2 H16 V18.6" fill="none" stroke="#3F78C4" stroke-width="1.1"/></svg>
<svg class="r" style="left:303px;top:118.3px;" width="20.2" height="17.6" viewBox="0 0 20.2 17.6"><rect x="0.5" y="0.5" width="10" height="9.4" fill="#fff" stroke="#7F7F7F" stroke-width="1"/><rect x="2.2" y="2.2" width="6.6" height="6" fill="#4A7DBD"/><path d="M2.2 7 L8.8 4.4 V6.8 H2.2z" fill="#fff"/><path d="M2.2 7.6 L5.5 5.6 L8.8 5.2 V7 H2.2z" fill="#4F9B7F"/><rect x="2.2" y="7" width="6.6" height="1.2" fill="#4A7DBD"/><rect x="9.7" y="7.7" width="10" height="9.4" fill="#fff" stroke="#7F7F7F" stroke-width="1"/><circle cx="16.9" cy="10.32" r="1.32" fill="#E9B562"/><path d="M11.07 15.52 L13.6 12.088 L15.36 14.064 L16.46 12.92 L18.44 14.896 L18.44 15.52z" fill="#4A7DBD"/><path d="M2.6 11.2 C2.6 14.4 4.4 15.2 7.6 15.2 M5.6 12.8 L8 15.2 L5.6 17.4 M4.6 11.4 H7.4" fill="none" stroke="#3F78C4" stroke-width="1.2"/></svg>
<svg class="r" style="left:303.7px;top:147.2px;" width="18.4" height="14.6" viewBox="0 0 18.4 14.6"><rect x="7.9" y="4.7" width="9.8" height="9.2" fill="#fff" stroke="#7F7F7F" stroke-width="1"/><circle cx="14.96" cy="7.26" r="1.3" fill="#E9B562"/><path d="M9.236 12.36 L11.72 8.994 L13.448 10.932 L14.528 9.81 L16.472 11.748 L16.472 12.36z" fill="#4A7DBD"/><path d="M2.6 6.6 C3 2.2 9.5 0.6 12.4 4.4" fill="none" stroke="#3F78C4" stroke-width="2"/><path d="M0.2 3.2 L6 4.6 L1.6 8.8z" fill="#3F78C4"/></svg>
<svg class="r" style="left:997px;top:87.5px;" width="20" height="20.5" viewBox="0 0 20 20.5"><path d="M14 1.9 H0.6 V13.9 H5" fill="none" stroke="#5E5E5E" stroke-width="1.1"/><path d="M17.6 0.2 L20 2.6 L9 13.4 L5.6 14.6 L6.6 11.2z" fill="#3F78C4"/><path d="M15.8 2 L18.2 4.4" stroke="#F3F3F3" stroke-width="0.7"/><path d="M7.4 10.6 L9.4 12.6" stroke="#F3F3F3" stroke-width="0.5"/><rect x="0.1" y="15.5" width="19.9" height="5" fill="#4472C4"/></svg>
<svg class="r" style="left:996.8px;top:119.2px;" width="20" height="15.5" viewBox="0 0 20 15.5"><g style="filter:drop-shadow(0.4px 0.6px 0.7px rgba(0,0,0,.35))"><path d="M2.4 9.2 L5.6 1.6 Q6.2 0.4 7.6 0.4 H15.4 Q17 0.4 17.6 1.4 L18.6 3.2 Q19 4 19 5 V10 Q19 11 18.4 11.6 L14.6 14.2 Q13.8 14.8 12.8 14.8 H4.4 Q3.2 14.8 2.8 14 L2.2 12.6 Q1.6 11 2.4 9.2z" fill="#8A8A8A"/><path d="M15.6 1 L18.4 3.6 Q18.8 4.2 18.8 5 V10 Q18.8 10.8 18.2 11.4 L14.2 14.2 L12.4 9.6z" fill="#A2A2A2"/><path d="M7.8 0.9 H14.8 Q16.6 0.9 15.9 2.6 L13.2 8.8 Q12.7 9.9 11.4 9.9 H4.2 Q2.4 9.9 3.1 8.2 L5.8 2.1 Q6.3 0.9 7.8 0.9z" fill="#fff"/><path d="M12.6 9.8 L14.4 13.8" stroke="#E8E8E8" stroke-width="0.8"/></g></svg>
<svg class="r" style="left:998px;top:147px;" width="19.5" height="18" viewBox="0 0 19.5 18"><rect x="0.7" y="0.7" width="11.4" height="11.4" fill="#fff" stroke="#7F7F7F" stroke-width="1"/><circle cx="8.88" cy="3.92" r="1.488" fill="#E9B562"/><path d="M2.308 10.12 L5.16 6.028 L7.144 8.384 L8.384 7.02 L10.616 9.376 L10.616 10.12z" fill="#4A7DBD"/><path d="M5.4 11.6 H13.6 V13 H11.6 V16 H13 V17.4 H5.6 V16 H7.4 V13 H5.4z" fill="#5E9E8A"/><rect x="11" y="13.4" width="7" height="4.2" fill="#fff" stroke="#7F7F7F" stroke-width="0.9"/><path d="M12.6 15.5 H16.4" stroke="#7F7F7F" stroke-width="0.8"/><path d="M13.8 2.6 C16 2 17.2 3.6 16.8 5.4 M15 0.8 L13.6 2.6 L15.4 4 M17.6 7.6 C18.6 5 17.4 3.6 17 3.4 M15 6 L17 8.4 L18.8 6" fill="none" stroke="#3F78C4" stroke-width="1.1"/></svg>
<svg class="r" style="left:1166.8px;top:90px;" width="38" height="38" viewBox="0 0 38 38"><rect x="0.5" y="0.5" width="35" height="35" fill="#fff" stroke="#7F7F7F" stroke-width="1"/><circle cx="27" cy="8.8" r="3.5" fill="#EBBE6A"/><path d="M3.2 32.4 V26 L13.2 18 L19.6 24 L23.8 19 L30 25.4 V32.4z" fill="#4A7DBD"/><rect x="17.7" y="26.7" width="20" height="10.6" fill="#fff" stroke="#7F7F7F" stroke-width="1"/><path d="M20.4 30.4 H35 M20.4 33.4 H35" stroke="#9A9A9A" stroke-width="0.9"/></svg>
<svg class="r" style="left:1254px;top:91px;" width="32" height="34" viewBox="0 0 32 34"><rect x="13.5" y="15.5" width="18" height="18" fill="#fff" stroke="#7F7F7F" stroke-width="1"/><rect x="0" y="0" width="26" height="26" fill="#EDC67E"/></svg>
<svg class="r" style="left:1332px;top:91px;" width="32" height="34" viewBox="0 0 32 34"><rect x="0" y="0" width="26" height="26" fill="#EDC67E"/><rect x="13.5" y="15.5" width="18" height="18" fill="#fff" stroke="#7F7F7F" stroke-width="1"/></svg>
<svg class="r" style="left:1407px;top:90px;" width="32" height="36" viewBox="0 0 32 36"><rect x="0.5" y="0.5" width="15" height="14" fill="#fff" stroke="#7F7F7F" stroke-width="1"/><rect x="11" y="10" width="15" height="14.6" fill="#EDC67E"/><rect x="0.5" y="18.5" width="15" height="15" fill="#fff" stroke="#7F7F7F" stroke-width="1"/><path d="M20.8 18.4 V33.4 L24.2 30.4 L26.8 35.8 L29.2 34.6 L26.6 29.4 L30.8 28.8z" fill="#fff" stroke="#7F7F7F" stroke-width="1"/></svg>
<svg class="r" style="left:1464px;top:90px;" width="36" height="36" viewBox="0 0 36 36"><rect x="0" y="0" width="2" height="36" fill="#7F7F7F"/><rect x="4.6" y="4.7" width="17.2" height="9" fill="#fff" stroke="#7F7F7F" stroke-width="1"/><rect x="18.1" y="18" width="17.9" height="17.8" fill="#EDC67E"/><path d="M17 27.5 H7" stroke="#3F78C4" stroke-width="2.6" fill="none"/><path d="M10.6 22.4 L5.4 27.5 L10.6 32.6" stroke="#3F78C4" stroke-width="2.6" fill="none"/></svg>
<svg class="r" style="left:1516px;top:90.2px;" width="36" height="36" viewBox="0 0 36 36"><rect x="1.6" y="1.6" width="23.4" height="22.8" fill="#F5F1F5" stroke="#B7B0B7" stroke-width="0.9"/><rect x="11.7" y="11.6" width="23.3" height="23" fill="#F5F1F5" fill-opacity=".8" stroke="#B7B0B7" stroke-width="0.9"/><rect x="1.6" y="1.6" width="23.4" height="22.8" fill="none" stroke="#B7B0B7" stroke-width="0.9"/><path d="M7 1 H31 M36 6.5 V31 M1 6 V31" stroke="#D8D3D8" stroke-width="0.8" stroke-dasharray="1 1.6" fill="none"/><rect x="0" y="0" width="3.8" height="3.6" fill="#A9A9A9"/><rect x="32.2" y="0" width="3.8" height="3.6" fill="#A9A9A9"/><rect x="0" y="32.2" width="3.8" height="3.6" fill="#A9A9A9"/><rect x="32.2" y="32.2" width="3.8" height="3.6" fill="#A9A9A9"/></svg>
<svg class="r" style="left:1568px;top:95px;" width="37" height="24.5" viewBox="0 0 37 24.5"><path d="M23.2 0.3 V23.8 H36.4z" fill="#7A7A7A"/><path d="M20.4 11.8 V23.6 H1.6z" fill="#fff" stroke="#BDBDBD" stroke-width="0.9"/><path d="M6.6 9.4 C6.6 5 9.6 3.4 14 3.6" fill="none" stroke="#3F78C4" stroke-width="2"/><path d="M12.6 -0.2 L18 3.8 L12.6 7.6z" fill="#3F78C4"/></svg>
<svg class="r" style="left:1641px;top:91.2px;" width="37" height="37" viewBox="0 0 37 37"><rect x="0.5" y="0.5" width="33" height="33" fill="none" stroke="#8A8A8A" stroke-width="1" stroke-dasharray="2.6 1.8"/><rect x="0.5" y="0.5" width="19" height="19" fill="#fff" stroke="#7F7F7F" stroke-width="1"/><circle cx="14" cy="5.4" r="2" fill="#EBBE6A"/><path d="M2.4 17.4 V13.6 L8.6 8.6 L12.4 12.4 L14 10.4 L17.6 14 V17.4z" fill="#4A7DBD"/><path d="M11 11.2 L16.4 16.6" stroke="#fff" stroke-width="0.8"/><path d="M24.6 21 V33 H36.4 M20.8 24.8 H32.6 V36.6" fill="none" stroke="#6E6E6E" stroke-width="2.6"/></svg>
<svg class="r" style="left:1689px;top:98.2px;" width="18.5" height="19" viewBox="0 0 18.5 19"><rect x="12.2" y="0.5" width="5.6" height="18" fill="#fff" stroke="#7F7F7F" stroke-width="1"/><path d="M6 0.5 H12 M6 18.5 H12" stroke="#8a8a8a" stroke-width="0.8" stroke-dasharray="0.9 0.9"/><path d="M3.4 6 V1 M1 3.2 L3.4 0.8 L5.8 3.2 M3.4 13 V18 M1 15.8 L3.4 18.2 L5.8 15.8" fill="none" stroke="#3F78C4" stroke-width="1.3"/><rect x="1.6" y="7.6" width="3.6" height="3.8" fill="#fff" stroke="#7F7F7F" stroke-width="0.9"/></svg>
<svg class="r" style="left:1688.2px;top:138.2px;" width="19" height="17.5" viewBox="0 0 19 17.5"><rect x="0.5" y="0.5" width="18" height="4.8" fill="#fff" stroke="#7F7F7F" stroke-width="1"/><path d="M0.5 6 V11 M18.5 6 V11" stroke="#8a8a8a" stroke-width="0.8" stroke-dasharray="0.9 0.9"/><path d="M6 14.6 H1 M3.2 12.2 L0.8 14.6 L3.2 17 M13 14.6 H18 M15.8 12.2 L18.2 14.6 L15.8 17" fill="none" stroke="#3F78C4" stroke-width="1.3"/><rect x="7.6" y="12.8" width="3.8" height="3.6" fill="#fff" stroke="#7F7F7F" stroke-width="0.9"/></svg>
<!-- part_left -->
<div class="r" style="left:266px;top:198px;width:19px;height:793px;background:#F3F3F3;"></div>
<div class="r" style="left:266px;top:198px;width:19px;height:19px;background:#fff;border:1px solid #9C9C9C;"></div>
<svg class="r" style="left:270.5px;top:203.6px;" width="10" height="6" viewBox="0 0 10 6"><path d="M0.4 5.5L5 0.4L9.6 5.5z" fill="#222"/></svg>
<div class="r" style="left:266px;top:216.5px;width:19px;height:604.5px;background:#fff;border:1px solid #9C9C9C;"></div>
<div class="r" style="left:266px;top:972.5px;width:19px;height:18.5px;background:#fff;border:1px solid #9C9C9C;"></div>
<svg class="r" style="left:270.5px;top:979px;" width="10" height="6" viewBox="0 0 10 6"><path d="M0.5 0.5L5 5L9.5 0.5z" fill="#222"/></svg>
<div class="t" style="left:14.70px;top:217.16px;font-size:18px;color:#444;letter-spacing:-1.011px;">1</div>
<div class="t" style="left:14.70px;top:354.16px;font-size:18px;color:#444;letter-spacing:-1.011px;">2</div>
<div class="t" style="left:14.70px;top:491.16px;font-size:18px;color:#444;letter-spacing:-1.011px;">3</div>
<div class="t" style="left:14.70px;top:628.16px;font-size:18px;color:#444;letter-spacing:-1.011px;">4</div>
<div class="t" style="left:14.70px;top:765.16px;font-size:18px;color:#C5472B;letter-spacing:-1.011px;">5</div>
<div class="t" style="left:14.70px;top:902.16px;font-size:18px;color:#444;letter-spacing:-1.011px;">6</div>
<div class="r" style="left:43px;top:220px;width:198px;height:111.5px;background:#fff;border:1px solid #C6C6C6;"></div>
<svg class="r" style="left:43px;top:220.6px;overflow:hidden" width="198" height="111.5" viewBox="0 0 198 111.5"><g transform="scale(0.15301)"><use href="#logo"/></g><text x="45.20" y="50.10" font-family="Liberation Sans, sans-serif" font-size="8.4" fill="#101018" font-weight="700" textLength="107.50" lengthAdjust="spacingAndGlyphs">Professional Presentations in Seconds with AI</text><text x="26.50" y="62.70" font-family="Liberation Sans, sans-serif" font-size="5" fill="#4a4a4a" textLength="78.30" lengthAdjust="spacingAndGlyphs">Never start from a blank slide again.</text><text x="26.50" y="70.40" font-family="Liberation Sans, sans-serif" font-size="5" fill="#4a4a4a" textLength="98.40" lengthAdjust="spacingAndGlyphs">• Create presentation from text, YouTube, pdf</text><text x="26.50" y="75.50" font-family="Liberation Sans, sans-serif" font-size="5" fill="#4a4a4a" textLength="55.90" lengthAdjust="spacingAndGlyphs">• No Credit Card Required</text><text x="26.50" y="81.40" font-family="Liberation Sans, sans-serif" font-size="5" fill="#4a4a4a" textLength="59.10" lengthAdjust="spacingAndGlyphs">• No need to learn new tool</text></svg>
<div class="r" style="left:43px;top:357px;width:198px;height:111.5px;background:#fff;border:1px solid #C6C6C6;"></div>
<svg class="r" style="left:43px;top:357.6px;overflow:hidden" width="198" height="111.5" viewBox="0 0 198 111.5"><g transform="scale(0.15301)"><use href="#logo"/></g><rect x="21.7" y="19.7" width="30.2" height="20.5" fill="#4472C4" stroke="#2F528F" stroke-width="0.6"/><polygon points="99.40,23.00 102.93,33.85 114.33,33.85 105.11,40.55 108.63,51.40 99.40,44.70 90.17,51.40 93.69,40.55 84.47,33.85 95.87,33.85" fill="#4472C4" stroke="#2F528F" stroke-width="0.6"/><path d="M130.6 44.6 H152.7 V65 H155.7 V60.6 L164.5 69.4 L155.7 78.4 V73.6 H152.7 V94.3 H130.6z" fill="#4472C4" stroke="#2F528F" stroke-width="0.6"/><path d="M45.8 65.4 C48 65.4 50 65.6 51.4 66.2 V81.6 L56.4 82.2 L51.4 82.8 V98.6 C50 99.1 48 99.3 45.8 99.3z" fill="#4472C4" stroke="#2F528F" stroke-width="0.6"/></svg>
<div class="r" style="left:43px;top:494px;width:198px;height:111.5px;background:#fff;border:1px solid #C6C6C6;"></div>
<svg class="r" style="left:43px;top:494.6px;overflow:hidden" width="198" height="111.5" viewBox="0 0 198 111.5"><g transform="scale(0.15301)"><use href="#logo"/></g><text x="45.20" y="54.20" font-family="Liberation Sans, sans-serif" font-size="8.4" fill="#101018" font-weight="700" textLength="107.50" lengthAdjust="spacingAndGlyphs">Professional Presentations in Seconds with AI</text><text x="26.50" y="62.70" font-family="Liberation Sans, sans-serif" font-size="5" fill="#4a4a4a" textLength="78.30" lengthAdjust="spacingAndGlyphs">Never start from a blank slide again.</text><text x="26.50" y="70.40" font-family="Liberation Sans, sans-serif" font-size="5" fill="#4a4a4a" textLength="98.40" lengthAdjust="spacingAndGlyphs">• Create presentation from text, YouTube, pdf</text><text x="26.50" y="75.50" font-family="Liberation Sans, sans-serif" font-size="5" fill="#4a4a4a" textLength="55.90" lengthAdjust="spacingAndGlyphs">• No Credit Card Required</text><text x="26.50" y="81.40" font-family="Liberation Sans, sans-serif" font-size="5" fill="#4a4a4a" textLength="59.10" lengthAdjust="spacingAndGlyphs">• No need to learn new tool</text></svg>
<div class="r" style="left:43px;top:631px;width:198px;height:111.5px;background:#fff;border:1px solid #C6C6C6;"></div>
<svg class="r" style="left:43px;top:631.6px;overflow:hidden" width="198" height="111.5" viewBox="0 0 198 111.5"><g transform="scale(0.15301)"><use href="#logo"/></g><text x="45.20" y="54.20" font-family="Liberation Sans, sans-serif" font-size="8.4" fill="#101018" font-weight="700" textLength="107.50" lengthAdjust="spacingAndGlyphs">Professional Presentations in Seconds with AI</text><text x="26.50" y="62.70" font-family="Liberation Sans, sans-serif" font-size="5" fill="#4a4a4a" textLength="78.30" lengthAdjust="spacingAndGlyphs">Never start from a blank slide again.</text><text x="26.50" y="70.40" font-family="Liberation Sans, sans-serif" font-size="5" fill="#4a4a4a" textLength="98.40" lengthAdjust="spacingAndGlyphs">• Create presentation from text, YouTube, pdf</text><text x="26.50" y="75.50" font-family="Liberation Sans, sans-serif" font-size="5" fill="#4a4a4a" textLength="55.90" lengthAdjust="spacingAndGlyphs">• No Credit Card Required</text><text x="26.50" y="81.40" font-family="Liberation Sans, sans-serif" font-size="5" fill="#4a4a4a" textLength="59.10" lengthAdjust="spacingAndGlyphs">• No need to learn new tool</text></svg>
<div class="r" style="left:40px;top:765.3px;width:204px;height:117.7px;background:#fff;border:3px solid #B8431F;"></div>
<svg class="r" style="left:43px;top:768px;overflow:hidden" width="198" height="111.5" viewBox="0 0 198 111.5"><g transform="scale(0.15301)"><use href="#logo"/><use href="#deerpic_s"/></g></svg>
<div class="r" style="left:43px;top:905px;width:198px;height:111.5px;background:#fff;border:1px solid #C6C6C6;"></div>
<svg class="r" style="left:43px;top:905.6px;overflow:hidden" width="198" height="88" viewBox="0 0 198 88"><g transform="scale(0.15301)"><use href="#logo"/></g><text x="72.90" y="13.00" font-family="Liberation Sans, sans-serif" font-size="3.7" fill="#4a4a4a" font-style="italic" textLength="35.50" lengthAdjust="spacingAndGlyphs">End of the Presentation</text><text x="25.00" y="19.10" font-family="Liberation Sans, sans-serif" font-size="3.7" fill="#4a4a4a" font-style="italic" textLength="63.30" lengthAdjust="spacingAndGlyphs">Marketing Team Meeting – Key Takeaways</text><text x="25.00" y="23.00" font-family="Liberation Sans, sans-serif" font-size="3.7" fill="#4a4a4a" font-style="italic" textLength="28.40" lengthAdjust="spacingAndGlyphs">Date: July 25, 2024</text><text x="25.00" y="32.20" font-family="Liberation Sans, sans-serif" font-size="3.7" fill="#4a4a4a" font-style="italic" textLength="50.70" lengthAdjust="spacingAndGlyphs">1. Campaign Performance Review:</text><text x="25.00" y="37.10" font-family="Liberation Sans, sans-serif" font-size="3.7" fill="#4a4a4a" font-style="italic" textLength="82.20" lengthAdjust="spacingAndGlyphs">- Q2 Results: 15% increase in social media engagement.</text><text x="25.00" y="41.30" font-family="Liberation Sans, sans-serif" font-size="3.7" fill="#4a4a4a" font-style="italic" textLength="81.00" lengthAdjust="spacingAndGlyphs">- Top Channels: Instagram &amp; LinkedIn with highest ROI.</text><text x="25.00" y="46.10" font-family="Liberation Sans, sans-serif" font-size="3.7" fill="#4a4a4a" font-style="italic" textLength="97.90" lengthAdjust="spacingAndGlyphs">- Customer Feedback:** Positive responses to new video strategy.</text><text x="25.00" y="54.00" font-family="Liberation Sans, sans-serif" font-size="3.7" fill="#4a4a4a" font-style="italic" textLength="36.50" lengthAdjust="spacingAndGlyphs">2. Upcoming Campaigns:</text><text x="25.00" y="58.20" font-family="Liberation Sans, sans-serif" font-size="3.7" fill="#4a4a4a" font-style="italic" textLength="90.50" lengthAdjust="spacingAndGlyphs">- Q3 Focus: Targeted email campaign for customer retention.</text><text x="25.00" y="62.90" font-family="Liberation Sans, sans-serif" font-size="3.7" fill="#4a4a4a" font-style="italic" textLength="78.00" lengthAdjust="spacingAndGlyphs">- Content Calendar: Finalized Q3 themes &amp; schedule.</text><text x="25.00" y="67.00" font-family="Liberation Sans, sans-serif" font-size="3.7" fill="#4a4a4a" font-style="italic" textLength="108.60" lengthAdjust="spacingAndGlyphs">- New Partnerships: Collaborating with influencers for key demographics.</text><text x="25.00" y="75.90" font-family="Liberation Sans, sans-serif" font-size="3.7" fill="#4a4a4a" font-style="italic" textLength="19.60" lengthAdjust="spacingAndGlyphs">Action Items:</text><text x="25.60" y="81.00" font-family="Liberation Sans, sans-serif" font-size="3.7" fill="#4a4a4a" font-style="italic" textLength="68.00" lengthAdjust="spacingAndGlyphs">-   Email Campaign: Design &amp; schedule for Q3.</text><text x="25.60" y="85.10" font-family="Liberation Sans, sans-serif" font-size="3.7" fill="#4a4a4a" font-style="italic" textLength="91.10" lengthAdjust="spacingAndGlyphs">-   Influencer Outreach: Finalize agreements &amp; content briefs.</text></svg>
<!-- part_main -->
<div class="r" style="left:448px;top:206px;width:1295px;height:730px;background:#fff;border:1px solid #C6C6C6;"></div>
<svg class="r" style="left:448px;top:207px" width="1294" height="729" viewBox="0 0 1294 729"><defs><g id="logo"><rect x="954.8" y="54.8" width="30.6" height="21.6" rx="2.4" fill="#0b0b0b"/><rect x="959" y="66.4" width="5" height="6.2" fill="#fff"/><rect x="966.6" y="62.4" width="5" height="10.2" fill="#fff"/><rect x="974.2" y="58.4" width="6" height="14.2" fill="#fff"/><path d="M967.4 76 L963.6 84.6 M970.2 76 V84.6 M973 76 L976.8 84.6" stroke="#0b0b0b" stroke-width="1.8" fill="none"/><text x="995.4" y="78" font-family="Liberation Sans, sans-serif" font-weight="700" font-size="24" fill="#0b0b0b" textLength="132.6" lengthAdjust="spacingAndGlyphs">MagicSlides</text></g><g id="deerpic" transform="translate(396 225.5)"><defs>
<clipPath id="ell"><ellipse cx="241" cy="160" rx="241" ry="160"/></clipPath>
<filter id="skd" x="0" y="0" width="100%" height="100%" color-interpolation-filters="sRGB">
<feTurbulence type="fractalNoise" baseFrequency="0.012 0.42" numOctaves="2" seed="11"/>
<feColorMatrix type="matrix" values="0 0 0 0 0.1  0 0 0 0 0.1  0 0 0 0 0.1  5 0 0 0 -2.55"/>
</filter>
<filter id="skl" x="0" y="0" width="100%" height="100%" color-interpolation-filters="sRGB">
<feTurbulence type="fractalNoise" baseFrequency="0.015 0.38" numOctaves="2" seed="23"/>
<feColorMatrix type="matrix" values="0 0 0 0 1  0 0 0 0 1  0 0 0 0 1  0 5 0 0 -2.6"/>
</filter>
<filter id="skd2" x="0" y="0" width="100%" height="100%" color-interpolation-filters="sRGB">
<feTurbulence type="fractalNoise" baseFrequency="0.02 0.5" numOctaves="2" seed="57"/>
<feColorMatrix type="matrix" values="0 0 0 0 0.12  0 0 0 0 0.12  0 0 0 0 0.12  0 0 5 0 -2.55"/>
</filter>
<filter id="skl2" x="0" y="0" width="100%" height="100%" color-interpolation-filters="sRGB">
<feTurbulence type="fractalNoise" baseFrequency="0.022 0.45" numOctaves="2" seed="71"/>
<feColorMatrix type="matrix" values="0 0 0 0 1  0 0 0 0 1  0 0 0 0 1  5 0 0 0 -2.6"/>
</filter>
<filter id="skh" x="0" y="0" width="100%" height="100%" color-interpolation-filters="sRGB">
<feTurbulence type="fractalNoise" baseFrequency="0.03 0.36" numOctaves="2" seed="13"/>
<feColorMatrix type="matrix" values="0 0 0 0 0.06  0 0 0 0 0.06  0 0 0 0 0.06  7 0 0 0 -3.5"/>
</filter>
<filter id="skh2" x="0" y="0" width="100%" height="100%" color-interpolation-filters="sRGB">
<feTurbulence type="fractalNoise" baseFrequency="0.035 0.4" numOctaves="2" seed="29"/>
<feColorMatrix type="matrix" values="0 0 0 0 0.06  0 0 0 0 0.06  0 0 0 0 0.06  0 7 0 0 -3.5"/>
</filter>
<filter id="blot" x="0" y="0" width="100%" height="100%" color-interpolation-filters="sRGB">
<feTurbulence type="fractalNoise" baseFrequency="0.045 0.06" numOctaves="3" seed="5"/>
<feColorMatrix type="matrix" values="0 0 0 0 0.15  0 0 0 0 0.15  0 0 0 0 0.15  3.2 0 0 0 -1.75"/>
</filter>
<filter id="blotw" x="0" y="0" width="100%" height="100%" color-interpolation-filters="sRGB">
<feTurbulence type="fractalNoise" baseFrequency="0.06 0.07" numOctaves="3" seed="41"/>
<feColorMatrix type="matrix" values="0 0 0 0 1  0 0 0 0 1  0 0 0 0 1  0 3.4 0 0 -1.85"/>
</filter>
<filter id="hatch" x="0" y="0" width="100%" height="100%" color-interpolation-filters="sRGB">
<feTurbulence type="fractalNoise" baseFrequency="0.22 0.3" numOctaves="2" seed="9"/>
<feColorMatrix type="matrix" values="0 0 0 0 0.08  0 0 0 0 0.08  0 0 0 0 0.08  6 0 0 0 -2.4"/>
</filter>
<linearGradient id="tone" x1="0" y1="0" x2="0" y2="1">
<stop offset="0" stop-color="#a2a2a2"/><stop offset=".15" stop-color="#a8a8a8"/><stop offset=".26" stop-color="#c0c0c0"/><stop offset=".38" stop-color="#dadada"/><stop offset=".55" stop-color="#e6e6e6"/><stop offset=".7" stop-color="#e0e0e0"/><stop offset="1" stop-color="#dedede"/>
</linearGradient>
 <linearGradient id="tone_s" x1="0" y1="0" x2="0" y2="1"><stop offset="0" stop-color="#8a8a8a"/><stop offset=".16" stop-color="#929292"/><stop offset=".28" stop-color="#aaaaaa"/><stop offset=".42" stop-color="#c6c6c6"/><stop offset=".6" stop-color="#cacaca"/><stop offset="1" stop-color="#bebebe"/></linearGradient>
<radialGradient id="lite" cx=".5" cy=".5" r=".5"><stop offset="0" stop-color="#fff" stop-opacity=".8"/><stop offset="1" stop-color="#fff" stop-opacity="0"/></radialGradient>
<radialGradient id="dk" cx=".5" cy=".5" r=".5"><stop offset="0" stop-color="#4a4a4a" stop-opacity=".5"/><stop offset="1" stop-color="#4a4a4a" stop-opacity="0"/></radialGradient>
<linearGradient id="ph" x1="0" y1="0" x2="0" y2="1"><stop offset="0" stop-color="#8E6C2C"/><stop offset=".3" stop-color="#9A8A3C"/><stop offset=".55" stop-color="#B59847"/><stop offset="1" stop-color="#C49A4E"/></linearGradient>
<radialGradient id="grn" cx=".5" cy=".5" r=".5"><stop offset="0" stop-color="#8C9C46" stop-opacity=".9"/><stop offset="1" stop-color="#8C9C46" stop-opacity="0"/></radialGradient>
<radialGradient id="brn" cx=".5" cy=".5" r=".5"><stop offset="0" stop-color="#9A602C" stop-opacity=".95"/><stop offset="1" stop-color="#9A602C" stop-opacity="0"/></radialGradient>
<linearGradient id="lfg" x1="0" y1="0" x2="0" y2="1"><stop offset="0" stop-color="#fff"/><stop offset=".5" stop-color="#fff"/><stop offset=".62" stop-color="#777"/><stop offset="1" stop-color="#444"/></linearGradient>
<mask id="legfade" maskUnits="userSpaceOnUse" x="40" y="130" width="250" height="200"><rect x="40" y="130" width="250" height="200" fill="url(#lfg)"/></mask>
<clipPath id="phc"><rect x="175" y="33.5" width="161" height="143"/></clipPath>
<clipPath id="bodyc"><path id="bodyp" d="M66 200 C60 182 68 166 84 161 C110 151 160 149 200 153 C220 155 238 162 258 177 L262 181 C254 196 240 210 220 222 C212 228 208 240 206 258 L204 304 L200 304 L199 258 C197 240 194 230 186 224 L130 220 C114 224 104 232 100 246 C97 258 100 274 102 290 L98 290 C93 272 90 258 93 244 C84 250 80 262 81 276 L77 276 C74 258 80 240 90 226 C78 222 70 212 66 200z M66 200 C60 206 62 228 68 240 L71 238 C68 226 68 212 72 206z"/></clipPath>
</defs><g clip-path="url(#ell)"><rect x="0" y="0" width="482" height="320" fill="url(#tone)"/><ellipse cx="400" cy="160" rx="130" ry="48" fill="url(#lite)"/><ellipse cx="60" cy="130" rx="90" ry="70" fill="url(#lite)" opacity=".55"/><ellipse cx="115.5" cy="67" rx="11" ry="9" fill="url(#lite)"/><ellipse cx="115.5" cy="67" rx="6" ry="5" fill="#fff" opacity=".6"/><ellipse cx="385" cy="72" rx="78" ry="44" fill="url(#dk)" opacity="1"/><ellipse cx="385" cy="72" rx="50" ry="26" fill="url(#dk)" opacity=".6"/><ellipse cx="270" cy="14" rx="110" ry="26" fill="url(#dk)" opacity=".55"/><ellipse cx="105" cy="62" rx="60" ry="22" fill="url(#dk)" opacity=".4"/><ellipse cx="395" cy="215" rx="60" ry="22" fill="url(#dk)" opacity=".3"/><rect x="0" y="0" width="482" height="320" filter="url(#blot)" opacity=".26"/><rect x="0" y="0" width="482" height="320" filter="url(#blotw)" opacity=".8"/><g transform="rotate(52 241 160)"><rect x="-60" y="-140" width="600" height="600" filter="url(#skd)" opacity="0.15"/></g><g transform="rotate(-38 241 160)"><rect x="-60" y="-140" width="600" height="600" filter="url(#skl)" opacity="0.38"/></g><g transform="rotate(86 241 160)"><rect x="-60" y="-140" width="600" height="600" filter="url(#skd)" opacity="0.11"/></g><g transform="rotate(18 241 160)"><rect x="-60" y="-140" width="600" height="600" filter="url(#skd2)" opacity="0.12"/></g><g transform="rotate(-70 241 160)"><rect x="-60" y="-140" width="600" height="600" filter="url(#skl2)" opacity="0.3"/></g><g transform="rotate(128 241 160)"><rect x="-60" y="-140" width="600" height="600" filter="url(#skd2)" opacity="0.1"/></g><g mask="url(#legfade)"><use href="#bodyp" fill="#4a4a4a" opacity=".3"/><g clip-path="url(#bodyc)"><g transform="rotate(35 160 230)"><rect x="-40" y="30" width="400" height="400" filter="url(#skh)" opacity="0.92"/></g><g transform="rotate(-28 160 230)"><rect x="-40" y="30" width="400" height="400" filter="url(#skh2)" opacity="0.92"/></g><g transform="rotate(80 160 230)"><rect x="-40" y="30" width="400" height="400" filter="url(#skh)" opacity="0.8"/></g><g transform="rotate(-65 160 230)"><rect x="-40" y="30" width="400" height="400" filter="url(#skh2)" opacity="0.7"/></g><g transform="rotate(8 160 230)"><rect x="-40" y="30" width="400" height="400" filter="url(#skh)" opacity="0.6"/></g></g><use href="#bodyp" fill="none" stroke="#2a2a2a" stroke-width="1.4" opacity=".7"/></g></g><g id="photo" clip-path="url(#phc)"><rect x="175" y="33.5" width="161" height="143" fill="url(#ph)"/><g style="filter:blur(3px)"><ellipse cx="262" cy="80" rx="60" ry="40" fill="url(#grn)"/><ellipse cx="190" cy="72" rx="26" ry="24" fill="url(#grn)" opacity=".55"/><ellipse cx="290" cy="74" rx="18" ry="12" fill="#A3B352" opacity=".4"/><ellipse cx="262" cy="120" rx="20" ry="10" fill="#9BA84C" opacity=".3"/><ellipse cx="324" cy="52" rx="36" ry="40" fill="url(#brn)"/><ellipse cx="205" cy="34" rx="50" ry="12" fill="url(#brn)" opacity=".55"/><ellipse cx="330" cy="150" rx="30" ry="30" fill="#C39A4E" opacity=".4"/></g><path d="M200 160 L209 88 M212 170 L205 112 M226 160 L252 140 M283 170 L330 140 M283 168 L334 161 M190 165 L184 118" stroke="#C9A45A" stroke-width="1.2" opacity=".7" fill="none"/><path d="M262.8 170.4 L316 136.4 M270 166 L336 156" stroke="#C4935A" stroke-width="1.5" opacity=".85" fill="none"/><path d="M175 160 C190 156 210 158 226 162 L246 160 L262 176.5 L175 176.5z" fill="#8A4A1E"/><path d="M175 160 C190 156 210 158 226 162" stroke="#3A2412" stroke-width="1.5" fill="none"/><circle cx="179" cy="163" r="1.1" fill="#F4E6D0"/><circle cx="185" cy="161" r="1.1" fill="#F4E6D0"/><circle cx="191" cy="162.5" r="1.1" fill="#F4E6D0"/><circle cx="198" cy="161" r="1.1" fill="#F4E6D0"/><circle cx="205" cy="162" r="1.1" fill="#F4E6D0"/><circle cx="212" cy="163.5" r="1.1" fill="#F4E6D0"/><circle cx="219" cy="165" r="1.1" fill="#F4E6D0"/><circle cx="183" cy="170" r="1.1" fill="#F4E6D0"/><circle cx="190" cy="168" r="1.1" fill="#F4E6D0"/><circle cx="197" cy="171" r="1.1" fill="#F4E6D0"/><circle cx="204" cy="168.5" r="1.1" fill="#F4E6D0"/><circle cx="211" cy="172" r="1.1" fill="#F4E6D0"/><circle cx="218" cy="170" r="1.1" fill="#F4E6D0"/><circle cx="226" cy="168" r="1.1" fill="#F4E6D0"/><circle cx="232" cy="172" r="1.1" fill="#F4E6D0"/><circle cx="186" cy="175" r="1.1" fill="#F4E6D0"/><circle cx="200" cy="175" r="1.1" fill="#F4E6D0"/><circle cx="214" cy="175.5" r="1.1" fill="#F4E6D0"/><path d="M246 150 L244 176.5 L270 176.5 L268 150z" fill="#E8D6B4"/><path d="M240 150 C240 162 236 170 232 176.5 L247 176.5 L248 150z" fill="#B88550"/><path d="M242.6 135 C242.6 126 249 121.6 255.5 121.6 C262 121.6 267.6 126 267.6 135 C267.6 144 264 150 262 154 C260 158.6 251 158.6 249 154 C247 150 242.6 144 242.6 135z" fill="#C79C68"/><path d="M247.6 125 C251 121.4 260 121.4 264 125 L262.6 134 C260 137 258.6 141 258 146 L252.6 146 C252 141 250.6 137 248.6 134z" fill="#5C3F2A"/><path d="M248.4 146 C250 142 260.6 142 262.2 146 C262.2 152 260.6 157.6 255.4 157.6 C250.2 157.6 248.4 152 248.4 146z" fill="#DDBF92"/><ellipse cx="255.2" cy="152.4" rx="5.4" ry="4.4" fill="#4E3830"/><ellipse cx="255.2" cy="150.6" rx="3" ry="1.6" fill="#7A5A4C"/><ellipse cx="245.8" cy="135.6" rx="1.9" ry="1.6" fill="#1E130C"/><ellipse cx="265" cy="137" rx="1.9" ry="1.6" fill="#1E130C"/><path d="M244 133 C234 132 227 123 227.5 113 C237 112 245 119 247 128z" fill="#6E4A30"/><path d="M241.5 129 C235.5 128 231.5 122 231.5 117 C237 118 241 122 243.5 127z" fill="#C4A084"/><path d="M267 133.5 C278 133.5 286 125 287.5 115.5 C278 113.5 269 120 266 129z" fill="#6E4A30"/><path d="M270 130 C276 129 281 124.5 283 119 C277 119 272 122.5 269.5 127.5z" fill="#A38362"/><path d="M247.4 118 C240 112 230 105 223 96.3 C217 88 214.5 76 213.9 64.5 C213.6 55 216 44 219.4 37.4" stroke="#85552E" stroke-width="4.4" fill="none" stroke-linecap="round"/><path d="M265 121 C272 116 282 113 290 108.9 C296 105 300 100 303 93 C307 84 309 70 309.3 51.1" stroke="#85552E" stroke-width="4.4" fill="none" stroke-linecap="round"/><path d="M222 94.5 C226 88 228.5 80 229 71.2" stroke="#85552E" stroke-width="3" fill="none" stroke-linecap="round"/><path d="M295.6 101.3 C292 94 290.6 86 291 77.9" stroke="#85552E" stroke-width="3" fill="none" stroke-linecap="round"/><path d="M270.6 117.6 C277 112 282 106 285 99.7" stroke="#85552E" stroke-width="3" fill="none" stroke-linecap="round"/><path d="M247.4 118 C240 112 230 105 223 96.3 C217 88 214.5 76 213.9 64.5 C213.6 55 216 44 219.4 37.4" stroke="#C9A276" stroke-width="1.5" fill="none" stroke-linecap="round" opacity=".85"/><path d="M265 121 C272 116 282 113 290 108.9 C296 105 300 100 303 93 C307 84 309 70 309.3 51.1" stroke="#C9A276" stroke-width="1.5" fill="none" stroke-linecap="round" opacity=".85"/><path d="M222 94.5 C226 88 228.5 80 229 71.2" stroke="#C9A276" stroke-width="1" fill="none" stroke-linecap="round" opacity=".8"/><path d="M295.6 101.3 C292 94 290.6 86 291 77.9" stroke="#C9A276" stroke-width="1" fill="none" stroke-linecap="round" opacity=".8"/><path d="M270.6 117.6 C277 112 282 106 285 99.7" stroke="#C9A276" stroke-width="1" fill="none" stroke-linecap="round" opacity=".8"/></g></g><g id="deerpic_s" transform="translate(396 225.5)"><g clip-path="url(#ell)"><rect x="0" y="0" width="482" height="320" fill="url(#tone_s)"/><ellipse cx="400" cy="160" rx="130" ry="48" fill="url(#lite)" opacity=".8"/><ellipse cx="60" cy="130" rx="90" ry="70" fill="url(#lite)" opacity=".5"/><ellipse cx="385" cy="72" rx="78" ry="44" fill="url(#dk)"/><ellipse cx="270" cy="14" rx="110" ry="26" fill="url(#dk)" opacity=".55"/><ellipse cx="105" cy="62" rx="60" ry="22" fill="url(#dk)" opacity=".4"/><g transform="rotate(52 241 160)"><rect x="-60" y="-140" width="600" height="600" filter="url(#skd)" opacity=".12"/></g><g mask="url(#legfade)"><use href="#bodyp" fill="#3c3c3c" opacity=".78"/></g></g><use href="#photo"/></g></defs><use href="#logo"/><use href="#deerpic"/></svg>
<svg class="r" style="left:0;top:0" width="1918" height="1015" viewBox="0 0 1918 1015"><rect x="844" y="432.6" width="482" height="320" fill="none" stroke="#6A6A6A" stroke-width="1.3"/><path d="M1084.6 432 V402.5" stroke="#6A6A6A" stroke-width="1.3"/><circle cx="844" cy="432.5" r="5.8" fill="#fff" stroke="#5E5E5E" stroke-width="2"/><circle cx="1085" cy="432.5" r="5.8" fill="#fff" stroke="#5E5E5E" stroke-width="2"/><circle cx="1326" cy="432.5" r="5.8" fill="#fff" stroke="#5E5E5E" stroke-width="2"/><circle cx="844" cy="592.5" r="5.8" fill="#fff" stroke="#5E5E5E" stroke-width="2"/><circle cx="1326" cy="592.5" r="5.8" fill="#fff" stroke="#5E5E5E" stroke-width="2"/><circle cx="844" cy="752.5" r="5.8" fill="#fff" stroke="#5E5E5E" stroke-width="2"/><circle cx="1085" cy="752.5" r="5.8" fill="#fff" stroke="#5E5E5E" stroke-width="2"/><circle cx="1326" cy="752.5" r="5.8" fill="#fff" stroke="#5E5E5E" stroke-width="2"/><path d="M1091.8 399.7 A11.6 11.6 0 1 1 1096.8 388.9 L1092.7 389.3 A7.4 7.4 0 1 0 1089.4 396.2z" fill="#fff" stroke="#5E5E5E" stroke-width="2.1" stroke-linejoin="miter"/><path d="M1086.6 388.9 H1103.8 L1095.2 397.6z" fill="#fff" stroke="#5E5E5E" stroke-width="2.1" stroke-linejoin="miter"/></svg>
<div class="r" style="left:291px;top:948px;width:1627px;height:1px;background:#C2C2C2;"></div>
<div class="t" style="left:303.25px;top:959.76px;font-size:18px;color:#5E5E5E;letter-spacing:0.107px;">Click to add notes</div>
<div class="r" style="left:289px;top:198px;width:1px;height:795px;background:#C4C4C4;"></div>
<div class="r" style="left:1899px;top:198px;width:19px;height:682px;background:#F3F3F3;"></div>
<div class="r" style="left:1899px;top:198px;width:19px;height:19px;background:#fff;border:1px solid #9C9C9C;"></div>
<svg class="r" style="left:1903.5px;top:203.6px;" width="10" height="6" viewBox="0 0 10 6"><path d="M0.4 5.5L5 0.4L9.6 5.5z" fill="#222"/></svg>
<div class="r" style="left:1899px;top:585px;width:19px;height:92.3px;background:#fff;border:1px solid #9C9C9C;"></div>
<div class="r" style="left:1899px;top:861px;width:19px;height:19px;background:#fff;border:1px solid #9C9C9C;"></div>
<svg class="r" style="left:1903.5px;top:868.4px;" width="10" height="6" viewBox="0 0 10 6"><path d="M0.4 0.5L5 5.6L9.6 0.5z" fill="#222"/></svg>
<svg class="r" style="left:1902.4px;top:883.6px;" width="12" height="16" viewBox="0 0 12 16"><path d="M6 0.2L11.8 7.4H9.6L11.8 15.4H0.2L2.4 7.4H0.2z" fill="#6A6A6A"/></svg>
<svg class="r" style="left:1902.4px;top:905px;" width="12" height="16" viewBox="0 0 12 16"><path d="M6 15.6L11.8 8.4H9.6L11.8 0.4H0.2L2.4 8.4H0.2z" fill="#6A6A6A"/></svg>
<!-- part_status -->
<div class="r" style="left:0px;top:993px;width:1918px;height:22px;background:#F3F3F3;"></div>
<div class="r" style="left:0px;top:993px;width:1918px;height:1px;background:#DCDCDC;"></div>
<div class="t" style="left:13.75px;top:1001.00px;font-size:13px;color:#444;letter-spacing:0.059px;">Slide 5 of 7</div>
<div class="t" style="left:142.50px;top:1001.00px;font-size:13px;color:#444;letter-spacing:-0.190px;">English (India)</div>
<div class="t" style="left:266.50px;top:1001.00px;font-size:13px;color:#333;letter-spacing:-0.138px;font-weight:700;">Accessibility: Investigate</div>
<div class="t" style="left:1307.00px;top:1001.00px;font-size:13px;color:#444;letter-spacing:0.008px;">Notes</div>
<div class="t" style="left:1387.50px;top:1001.00px;font-size:13px;color:#444;letter-spacing:-0.106px;">Comments</div>
<div class="t" style="left:1853.00px;top:1001.00px;font-size:13px;color:#444;letter-spacing:-0.673px;">81%</div>
<svg class="r" style="left:103.5px;top:999px;" width="19" height="15" viewBox="0 0 19 15"><path d="M8.4 2 V12.6 L6.6 11.2 H0.6 V1 H6.6z M8.4 2 L10 1 H13" fill="none" stroke="#666" stroke-width="1"/><path d="M10 11.2 H16 V6" fill="none" stroke="#666" stroke-width="1"/><path d="M10.6 6 L13 8.6 L17.6 2.2" fill="none" stroke="#666" stroke-width="1.2"/></svg>
<svg class="r" style="left:244px;top:998px;" width="20" height="17" viewBox="0 0 20 17"><path d="M9 1.2 V8 M6.4 5.6 L9 8.2 L11.6 5.6" fill="none" stroke="#444" stroke-width="1.2"/><path d="M5.4 3.4 A6.6 6.6 0 0 0 6 14.6" fill="none" stroke="#444" stroke-width="1.2" stroke-dasharray="2.4 1.6"/><path d="M12.4 3.4 A6.6 6.6 0 0 1 15.4 7" fill="none" stroke="#444" stroke-width="1.2" stroke-dasharray="2.4 1.6"/><path d="M10.6 9.6 L17.4 16.4 M17.4 9.6 L10.6 16.4" stroke="#333" stroke-width="1.7"/></svg>
<svg class="r" style="left:1288px;top:998px;" width="14" height="15" viewBox="0 0 14 15"><path d="M7 0.8 L10.6 4.6 H3.4z" fill="#555"/><path d="M0.6 6.6 H13.4 M0.6 9.6 H13.4 M0.6 12.6 H9" stroke="#555" stroke-width="1.1"/></svg>
<svg class="r" style="left:1367px;top:999px;" width="18" height="16" viewBox="0 0 18 16"><path d="M2 0.6 H15.4 Q16.8 0.6 16.8 2 V9.4 Q16.8 10.8 15.4 10.8 H8.2 L4.2 14.6 V10.8 H2 Q0.6 10.8 0.6 9.4 V2 Q0.6 0.6 2 0.6z" fill="#555"/></svg>
<div class="r" style="left:1474px;top:993px;width:50px;height:22px;background:#C8C8C8;"></div>
<svg class="r" style="left:1490px;top:999px;" width="18" height="16" viewBox="0 0 18 16"><rect x="0.6" y="0.6" width="16.4" height="14.4" fill="none" stroke="#666" stroke-width="1.1"/><path d="M4.4 0.6 V15 M4.4 8.6 H17" stroke="#666" stroke-width="1.1"/><rect x="7" y="3" width="7.4" height="3.4" fill="none" stroke="#666" stroke-width="1"/></svg>
<svg class="r" style="left:1540px;top:999px;" width="17" height="15" viewBox="0 0 17 15"><rect x="0.6" y="0.6" width="6" height="5" fill="none" stroke="#666" stroke-width="1.1"/><rect x="9.8" y="0.6" width="6" height="5" fill="none" stroke="#666" stroke-width="1.1"/><rect x="0.6" y="8.8" width="6" height="5" fill="none" stroke="#666" stroke-width="1.1"/><rect x="9.8" y="8.8" width="6" height="5" fill="none" stroke="#666" stroke-width="1.1"/></svg>
<svg class="r" style="left:1590px;top:999px;" width="18" height="15" viewBox="0 0 18 15"><path d="M8.8 1.8 V13.6 M8.8 1.8 L7.4 0.8 H0.6 V12.4 H7.4 L8.8 13.6 L10.2 12.4 H17 V0.8 H10.2z" fill="none" stroke="#666" stroke-width="1.1"/><path d="M2.4 3.4 H6.6 M2.4 5.6 H6.6 M2.4 7.8 H6.6 M2.4 10 H6.6 M11 3.4 H15.2 M11 5.6 H15.2 M11 7.8 H15.2 M11 10 H15.2" stroke="#666" stroke-width="0.8"/></svg>
<svg class="r" style="left:1640px;top:998px;" width="18" height="16" viewBox="0 0 18 16"><path d="M0.4 1 H17.2" stroke="#666" stroke-width="1.2"/><rect x="2" y="1.4" width="13.6" height="7.6" fill="none" stroke="#666" stroke-width="1.1"/><path d="M8.8 9 V14 M5.4 15 H12.2" stroke="#666" stroke-width="1.1"/></svg>
<div class="r" style="left:1681.5px;top:1006.3px;width:9px;height:1.2px;background:#555;"></div>
<div class="r" style="left:1697px;top:1006.5px;width:125px;height:1px;background:#666;"></div>
<div class="r" style="left:1759px;top:1002.5px;width:1px;height:9px;background:#666;"></div>
<div class="r" style="left:1743.5px;top:999px;width:6px;height:15px;background:#4a4a4a;"></div>
<div class="r" style="left:1828px;top:1006.3px;width:9.4px;height:1.2px;background:#555;"></div>
<div class="r" style="left:1832.1px;top:1002.2px;width:1.2px;height:9.4px;background:#555;"></div>
<svg class="r" style="left:1896px;top:999.5px;" width="15" height="14" viewBox="0 0 15 14"><rect x="0.6" y="0.6" width="13.4" height="12.4" fill="none" stroke="#666" stroke-width="1" stroke-dasharray="1.2 1"/><path d="M7.3 2.4 V11.2 M2.6 6.8 H12 M5.8 3.8 L7.3 2.2 L8.8 3.8 M5.8 9.8 L7.3 11.4 L8.8 9.8 M4 5.4 L2.4 6.8 L4 8.2 M10.6 5.4 L12.2 6.8 L10.6 8.2" fill="none" stroke="#555" stroke-width="0.9"/></svg>
</div></body></html>
